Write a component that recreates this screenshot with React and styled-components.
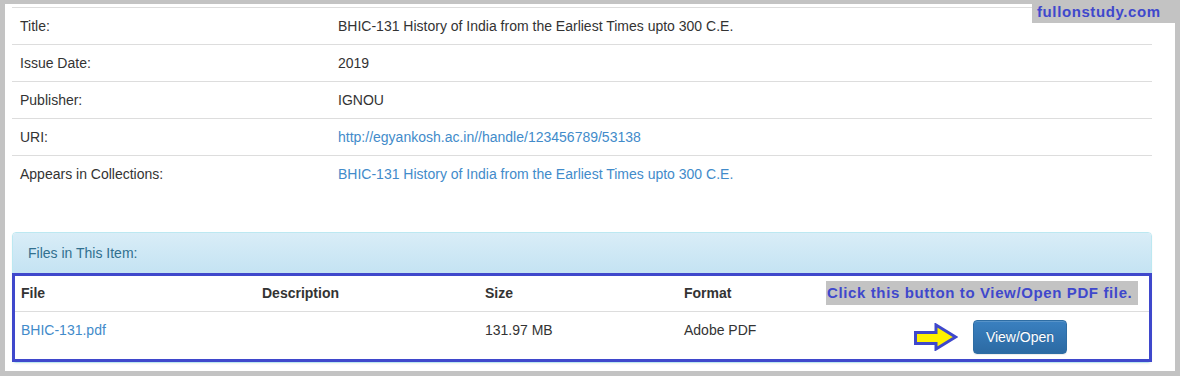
import React from "react";
import styled, { createGlobalStyle } from "styled-components";

const GlobalStyle = createGlobalStyle`
  html, body { margin: 0; padding: 0; background: #c3c3c3; }
  body {
    font-family: "Liberation Sans", Arial, Helvetica, sans-serif;
    font-size: 14px;
    line-height: 20px;
    color: #333;
  }
  * { box-sizing: border-box; }
`;

const Frame = styled.div`
  position: relative;
  width: 1180px;
  height: 376px;
  padding: 4px 5px 5px 5px;
  background: #c3c3c3;
  display: flex;
`;

const Page = styled.div`
  flex: 1;
  background: #fff;
  padding: 3px 23px 8px 7px;
  display: flex;
  flex-direction: column;
`;

const Watermark = styled.div`
  position: absolute;
  top: 0;
  right: 0;
  width: 148px;
  height: 23px;
  background: #c3c3c3;
  color: #3f48cc;
  font-weight: bold;
  font-size: 15px;
  letter-spacing: 0.6px;
  line-height: 23px;
  padding-left: 5px;
`;

const MetaTable = styled.div`
  display: flex;
  flex-direction: column;
  margin-bottom: 40px;
`;

const MetaRow = styled.div`
  display: grid;
  grid-template-columns: 318px 1fr;
  border-top: 1px solid #ddd;
`;

const MetaCell = styled.div`
  padding: 8px;
  line-height: 20px;
`;

const Link = styled.a`
  color: #428bca;
  text-decoration: none;
`;

const Panel = styled.div`
  border: 1px solid #bce8f1;
  border-radius: 4px;
  box-shadow: 0 1px 2px rgba(0, 0, 0, 0.05);
  display: flex;
  flex-direction: column;
`;

const PanelHeading = styled.div`
  padding: 10px 15px;
  line-height: 20px;
  color: #31708f;
  background-image: linear-gradient(to bottom, #d9edf7 0%, #c4e3f3 100%);
  border-radius: 3px 3px 0 0;
`;

const Highlight = styled.div`
  margin: 0 -1px;
  border: 3px solid #3f48cc;
  background: #fff;
  display: flex;
  flex-direction: column;
`;

const FilesRow = styled.div`
  position: relative;
  display: grid;
  grid-template-columns: 241px 223px 199px 212px 1fr;
  border-bottom: ${(p) => (p.$head ? "1px solid #ddd" : "none")};
  height: ${(p) => (p.$head ? "36px" : "47px")};
`;

const FilesCell = styled.div`
  padding: ${(p) => (p.$head ? "7px 6px 8px" : "8px 6px 5px")};
  line-height: 20px;
  font-weight: ${(p) => (p.$head ? "bold" : "normal")};
  color: #333;
`;

const ActionCell = styled.div`
  padding: 8px 0 5px 24px;
  display: flex;
  align-items: center;
  gap: 15px;
  align-self: start;
`;

const Note = styled.div`
  position: absolute;
  left: 811px;
  top: 5px;
  width: 312px;
  height: 24px;
  background: #c3c3c3;
  color: #3f48cc;
  font-weight: bold;
  font-size: 15px;
  letter-spacing: 0.62px;
  line-height: 24px;
  padding-left: 1px;
  white-space: nowrap;
`;

const Button = styled.a`
  display: inline-flex;
  align-items: center;
  justify-content: center;
  width: 94px;
  height: 34px;
  border: 1px solid #2e6da4;
  border-radius: 4px;
  color: #fff;
  text-decoration: none;
  font-size: 14px;
  background-image: linear-gradient(to bottom, #3a80c0 0%, #2c6aa3 100%);
  text-shadow: 0 -1px 0 rgba(0, 0, 0, 0.2);
  box-shadow: inset 0 1px 0 rgba(255, 255, 255, 0.15), 0 1px 1px rgba(0, 0, 0, 0.075);
`;

const ArrowSvg = styled.svg`
  display: block;
  flex: none;
`;

const Arrow = () => (
  <ArrowSvg width="44" height="28" viewBox="0 0 44 28">
    <polygon
      points="1.5,9.5 22,9.5 22,2 41.5,14 22,26 22,20.5 1.5,20.5"
      fill="#fff200"
      stroke="#3f48cc"
      strokeWidth="3"
      strokeLinejoin="miter"
    />
  </ArrowSvg>
);

const meta = [
  { label: "Title:", value: "BHIC-131 History of India from the Earliest Times upto 300 C.E." },
  { label: "Issue Date:", value: "2019" },
  { label: "Publisher:", value: "IGNOU" },
  { label: "URI:", value: "http://egyankosh.ac.in//handle/123456789/53138", link: true },
  {
    label: "Appears in Collections:",
    value: "BHIC-131 History of India from the Earliest Times upto 300 C.E.",
    link: true,
  },
];

export default function App() {
  return (
    <>
      <GlobalStyle />
      <Frame>
        <Page>
          <MetaTable>
            {meta.map((m) => (
              <MetaRow key={m.label}>
                <MetaCell>{m.label}</MetaCell>
                <MetaCell>{m.link ? <Link href="#">{m.value}</Link> : m.value}</MetaCell>
              </MetaRow>
            ))}
          </MetaTable>
          <Panel>
            <PanelHeading>Files in This Item:</PanelHeading>
            <Highlight>
              <FilesRow $head>
                <FilesCell $head>File</FilesCell>
                <FilesCell $head>Description</FilesCell>
                <FilesCell $head>Size</FilesCell>
                <FilesCell $head>Format</FilesCell>
                <FilesCell $head />
                <Note>Click this button to View/Open PDF file.</Note>
              </FilesRow>
              <FilesRow>
                <FilesCell>
                  <Link href="#">BHIC-131.pdf</Link>
                </FilesCell>
                <FilesCell />
                <FilesCell>131.97 MB</FilesCell>
                <FilesCell>Adobe PDF</FilesCell>
                <ActionCell>
                  <Arrow />
                  <Button href="#">View/Open</Button>
                </ActionCell>
              </FilesRow>
            </Highlight>
          </Panel>
        </Page>
        <Watermark>fullonstudy.com</Watermark>
      </Frame>
    </>
  );
}
